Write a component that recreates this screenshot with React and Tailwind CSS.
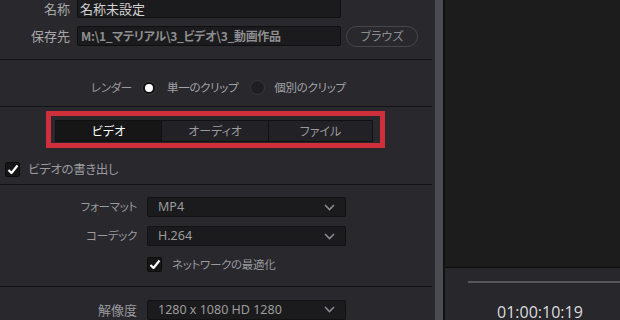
import React from "react";

const jp = "[font-family:'Noto_Sans_CJK_JP','Noto_Sans',sans-serif] [font-feature-settings:'palt']";

function Chevron() {
  return (
    <svg width="11" height="7" viewBox="0 0 11 7" className="shrink-0">
      <path d="M1 1 L5.5 5.5 L10 1" stroke="#8a8a8e" strokeWidth="1.6" fill="none" />
    </svg>
  );
}

function Check() {
  return (
    <div className="w-[15px] h-[15px] bg-[#161616] border border-[#0c0c0c] rounded-[2px] flex items-center justify-center">
      <svg width="12" height="11" viewBox="0 0 12 11">
        <path d="M1.5 6 L4.5 9 L10.5 1.5" stroke="#ffffff" strokeWidth="2.2" fill="none" strokeLinejoin="round" />
      </svg>
    </div>
  );
}

function Select({ value, className = "" }) {
  return (
    <div className={`w-[199px] h-[20px] bg-[#1b1b1d] border border-[#121212] rounded-[2px] flex items-center justify-between pl-[10px] pr-[10px] ${className}`}>
      <span className="text-[12.5px] text-[#9c9c9e] [font-family:'Noto_Sans',sans-serif] leading-none">{value}</span>
      <Chevron />
    </div>
  );
}

function Sep({ className = "" }) {
  return <div className={`w-[432px] h-px bg-[#131315] ${className}`} />;
}

export default function App() {
  return (
    <div className={`w-[620px] h-[320px] flex overflow-hidden bg-[#28282d] ${jp}`}>

      {/* left settings panel */}
      <div className="w-[435px] flex flex-col shrink-0">

        {/* name / path */}
        <div className="flex flex-col gap-[8px] mt-[-3px]">
          <div className="flex items-center h-[21px]">
            <span className="w-[70px] text-right text-[13px] leading-[14px] mt-[3px] text-[#a8a8aa]">名称</span>
            <div className="ml-[7px] w-[264px] h-[21px] bg-[#1b1b1d] border border-[#101010] rounded-[2px] flex items-center px-[2px] pt-[3px] text-[13px] leading-[14px] text-[#d2d2d2]">
              名称未設定
            </div>
          </div>
          <div className="flex items-center h-[20px]">
            <span className="w-[70px] text-right text-[13px] text-[#a8a8aa]">保存先</span>
            <div className="ml-[7px] w-[264px] h-[20px] bg-[#1b1b1d] border border-[#101010] rounded-[2px] flex items-center px-[3px] text-[12px] tracking-[-0.3px] font-semibold text-[#8e8e90] whitespace-nowrap overflow-hidden">
              M:\1_マテリアル\3_ビデオ\3_動画作品
            </div>
            <div className="ml-[5px] w-[72px] h-[21px] rounded-full border border-[#47474c] flex items-center justify-center text-[12px] text-[#8c8c90]">
              ブラウズ
            </div>
          </div>
        </div>

        <Sep className="mt-[13px]" />

        {/* render mode */}
        <div className="mt-[19px] h-[20px] flex items-center tracking-[-0.3px] text-[#9a9a9e]">
          <span className="ml-[91px] text-[11.5px]">レンダー</span>
          <div className="ml-[10px] w-[14px] h-[14px] rounded-full bg-[#111113] border border-[#3a3a3e] flex items-center justify-center">
            <div className="w-[8px] h-[8px] rounded-full bg-white" />
          </div>
          <span className="ml-[11px] text-[11.5px] text-[#a2a2a6]">単一のクリップ</span>
          <div className="ml-[12px] w-[15px] h-[15px] rounded-full bg-[#1f1f21] border border-[#38383c]" />
          <span className="ml-[9px] text-[11.5px] text-[#a2a2a6]">個別のクリップ</span>
        </div>

        <Sep className="mt-[10px]" />

        {/* tabs, highlighted */}
        <div className="mt-[4px] ml-[46px] w-[339px] h-[40px] border-[5px] border-[#cf2f3a] pl-[4px] pt-[4px]">
          <div className="w-[318px] h-[22px] flex border border-[#111] bg-[#222226] text-[12px]">
            <div className="w-[105px] bg-[#161617] text-white flex items-center justify-center">ビデオ</div>
            <div className="w-[107px] border-l border-[#111] text-[#9a9a9e] flex items-center justify-center">オーディオ</div>
            <div className="flex-1 border-l border-[#111] text-[#9a9a9e] flex items-center justify-center">ファイル</div>
          </div>
        </div>

        {/* export video */}
        <div className="mt-[14px] ml-[5px] h-[15px] flex items-center">
          <Check />
          <span className="ml-[8px] text-[12.5px] tracking-[-0.4px] text-[#9a9a9e]">ビデオの書き出し</span>
        </div>

        <Sep className="mt-[7px]" />

        {/* format */}
        <div className="mt-[12px] flex items-center">
          <span className="w-[137px] text-right text-[11.5px] tracking-[-0.3px] text-[#9a9a9e]">フォーマット</span>
          <Select value="MP4" className="ml-[10px]" />
        </div>
        <div className="mt-[9px] flex items-center">
          <span className="w-[137px] text-right text-[11.5px] tracking-[-0.3px] text-[#9a9a9e]">コーデック</span>
          <Select value="H.264" className="ml-[10px]" />
        </div>
        <div className="mt-[11px] ml-[147px] h-[15px] flex items-center">
          <Check />
          <span className="ml-[10px] text-[11.5px] tracking-[-0.3px] text-[#9a9a9e]">ネットワークの最適化</span>
        </div>

        <Sep className="mt-[14px]" />

        <div className="mt-[13px] flex items-center">
          <span className="w-[137px] text-right text-[13px] text-[#9a9a9e]">解像度</span>
          <Select value="1280 x 1080 HD 1280" className="ml-[10px]" />
        </div>
      </div>

      {/* scrollbar */}
      <div className="w-[8px] bg-[#4a4c51] shrink-0" />
      <div className="w-[2px] bg-[#111113] shrink-0" />

      {/* viewer */}
      <div className="flex-1 flex flex-col">
        <div className="h-[273px] bg-[#1c1c1d] border-b border-[#0e0e0f]" />
        <div className="flex-1 bg-[#27272c] flex flex-col">
          <div className="mt-[13px] ml-[23px] h-[2px] bg-[#56565b]" />
          <div className="mt-[21px] ml-[52px] text-[16px] leading-none text-[#dcdcdc] [font-family:'Open_Sans',sans-serif]">01:00:10:19</div>
        </div>
      </div>
    </div>
  );
}
